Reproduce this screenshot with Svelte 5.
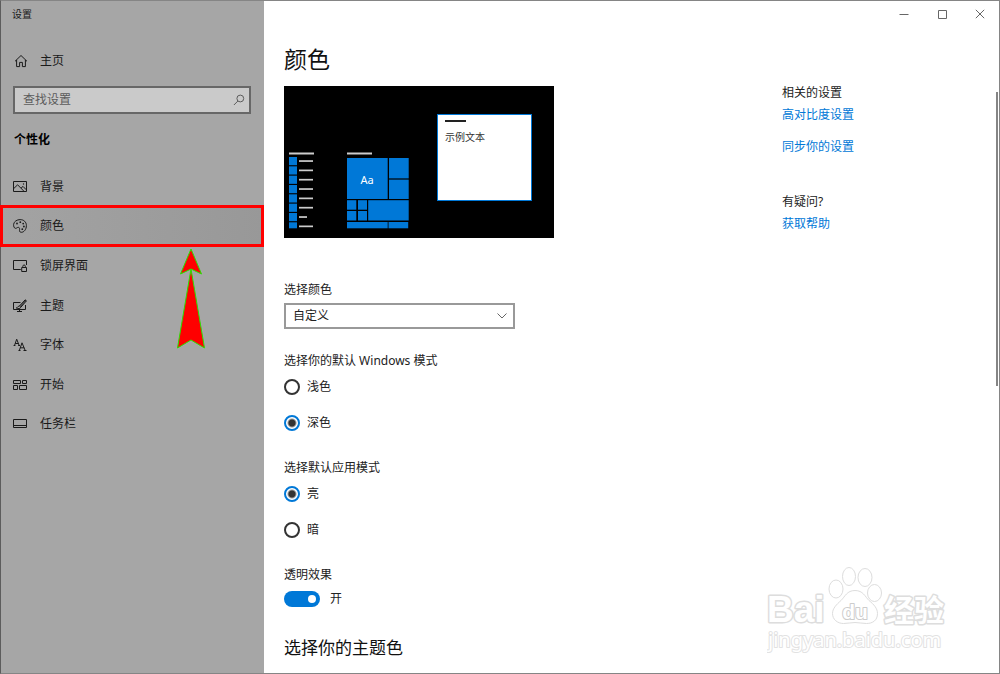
<script lang="ts">
  const navItems = [
    { id: 'background', label: '背景' },
    { id: 'colors', label: '颜色' },
    { id: 'lock', label: '锁屏界面' },
    { id: 'themes', label: '主题' },
    { id: 'fonts', label: '字体' },
    { id: 'start', label: '开始' },
    { id: 'taskbar', label: '任务栏' },
  ];

  const appRows = [0, 1, 2, 3, 4, 5, 6, 7];

  let active = $state('colors');
  let query = $state('');
  let colorMode = $state('custom');
  let windowsMode = $state('dark');
  let appMode = $state('light');
  let transparency = $state(true);
</script>

<div class="window">
  <aside class="sidebar">
    <div class="window-title">设置</div>
    <a class="home" href="#home">
      <svg class="icon" viewBox="0 0 14 14" aria-hidden="true">
        <path d="M1 7.3 7 1.5l6 5.8M2.6 6v6.6h3V8.4h2.8v4.2h3V6" />
      </svg>
      主页
    </a>

    <div class="search">
      <input type="text" aria-label="查找设置" placeholder="查找设置" bind:value={query} />
      <svg viewBox="0 0 12 12" aria-hidden="true">
        <circle cx="7.3" cy="4.5" r="3.4" />
        <path d="M4.9 7 .9 11" />
      </svg>
    </div>

    <h2 class="group">个性化</h2>

    <nav>
      {#each navItems as item}
        <a
          class="nav-item"
          class:active={active === item.id}
          href="#{item.id}"
          onclick={() => (active = item.id)}
        >
          <svg class="icon" viewBox="0 0 14 14" aria-hidden="true">
            {#if item.id === 'background'}
              <path d="M.5 1.5h13v10H.5zM.8 8.5 4.6 4.8l6.4 6.5M8 8.2l2-1.800 3.300 3.400" />
              <circle cx="10.5" cy="4" r=".3" />
            {:else if item.id === 'colors'}
              <path
                d="M.6 5.4C.9 2.400 4 .6 7.200.6c3.600 0 6.200 2.500 6.200 6 0 3.700-2.400 6.700-5 6.700-2.200 0-2-1.700-1.800-2.900.2-1.400-.6-2.300-1.800-2-1 .3-1.500 1.200-2.500.9C1.100 9 .5 7.300.6 5.400Z"
              />
              <g class="dots">
                <circle cx="4" cy="4.500" r=".9" />
                <circle cx="7.300" cy="3.200" r=".9" />
                <circle cx="10.200" cy="4.600" r=".9" />
                <circle cx="10.900" cy="7.500" r=".9" />
                <circle cx="9.300" cy="10.200" r=".9" />
              </g>
            {:else if item.id === 'lock'}
              <path d="M7.500 10.500H.5v-9h13V6M4.500 10.500h3M8.700 8.500h4.800v4H8.700zM9.800 8.500V7.300c0-1.800 2.600-1.800 2.600 0v1.200" />
            {:else if item.id === 'themes'}
              <path d="M7.500 3.500h-7v7h12V6M6.500 10.500v2M4 12.500h5" />
              <path d="M13.200 1 7.500 7.200M12.200.8l1.200 1.100-5.500 6.300-1.500-1.200zM6.200 7.200C4.400 7.100 4.800 8.800 3.300 9c1.800 1 4.200.8 4.400-.7" />
            {:else if item.id === 'fonts'}
              <path d="M1.500 7.500 3.700 1.200 6.200 7.500M2.200 5.500h3M.6 7.500h1.800M5.200 7.500H7" />
              <path d="M6.300 12.500 9 4.800l3.200 7.700M7.300 9.800h3.900M5.500 12.500h2M10.500 12.500h3" />
            {:else if item.id === 'start'}
              <path d="M.5 2.500h7v3h-7zM9.500 2.500h4v3h-4zM.5 7.500h4v4h-4zM6.500 7.500h7v4h-7z" />
            {:else}
              <path d="M.5 2.500h13v8H.5zM.5 8.500h13" />
            {/if}
          </svg>
          {item.label}
        </a>
      {/each}
      <svg class="pointer" viewBox="0 0 30 102" aria-hidden="true">
        <path d="M15 1 25.500 26 15 21 4.500 26ZM15 21 28.500 100 15 92 1.500 100Z" />
      </svg>
    </nav>
  </aside>

  <main>
    <div class="caption">
      <button aria-label="最小化">
        <svg viewBox="0 0 10 10"><path d="M.5 5.500h9" /></svg>
      </button>
      <button aria-label="最大化">
        <svg viewBox="0 0 10 10"><path d="M1.500 1.500h8v8h-8z" /></svg>
      </button>
      <button aria-label="关闭">
        <svg viewBox="0 0 10 10"><path d="M.8.8l8.400 8.400M9.200.8.8 9.200" /></svg>
      </button>
    </div>

    <div class="page">
      <div class="content">
        <h1>颜色</h1>

        <svg class="preview" viewBox="0 0 270 152" role="img" aria-label="预览">
          <rect width="270" height="152" fill="#000" />
          <g fill="#ccc">
            <rect x="5" y="66.500" width="25" height="2" />
            <rect x="63" y="66.500" width="25" height="2" />
            {#each appRows as row}
              <rect x="15" y={74.2 + row * 9.33} width={row === 6 ? 8 : 14} height="1.700" />
            {/each}
          </g>
          <g fill="#0078d7">
            {#each appRows as row}
              <rect x="5" y={71 + row * 9.33} width="8" height={row === 7 ? 6 : 8.2} />
            {/each}
            <rect x="63" y="72" width="40.700" height="41" />
            <rect x="105" y="72" width="19.700" height="20.400" />
            <rect x="105" y="93.600" width="19.700" height="19.400" />
            <rect x="63" y="114.200" width="9.300" height="9.500" />
            <rect x="74" y="114.200" width="9" height="9.500" />
            <rect x="63" y="125" width="9.300" height="9.500" />
            <rect x="74" y="125" width="9" height="9.500" />
            <rect x="84.200" y="114.200" width="40.500" height="20.300" />
            <rect x="63" y="136" width="40.700" height="6.300" />
            <rect x="104.500" y="136" width="19.700" height="6.300" />
          </g>
          <text x="83" y="98" text-anchor="middle" font-size="11" fill="#fff">Aa</text>
          <rect x="153.500" y="28.500" width="94" height="86" fill="#fff" stroke="#0078d7" />
          <rect x="161" y="34" width="21" height="2" fill="#222" />
          <text x="161" y="55" font-size="10" fill="#333">示例文本</text>
        </svg>

        <div class="field">
          <label for="color-mode">选择颜色</label>
          <div class="select">
            <select id="color-mode" bind:value={colorMode}>
              <option value="light">浅色</option>
              <option value="dark">深色</option>
              <option value="custom">自定义</option>
            </select>
            <svg viewBox="0 0 10 6" aria-hidden="true"><path d="M.5.5 5 5 9.500.5" /></svg>
          </div>
        </div>

        <fieldset>
          <legend>选择你的默认 Windows 模式</legend>
          <label><input type="radio" value="light" bind:group={windowsMode} />浅色</label>
          <label><input type="radio" value="dark" bind:group={windowsMode} />深色</label>
        </fieldset>

        <fieldset>
          <legend>选择默认应用模式</legend>
          <label><input type="radio" value="light" bind:group={appMode} />亮</label>
          <label><input type="radio" value="dark" bind:group={appMode} />暗</label>
        </fieldset>

        <fieldset>
          <legend>透明效果</legend>
          <label class="toggle">
            <input type="checkbox" role="switch" bind:checked={transparency} />
            {transparency ? '开' : '关'}
          </label>
        </fieldset>

        <h2>选择你的主题色</h2>
      </div>

      <div class="related">
        <h3>相关的设置</h3>
        <a href="#contrast">高对比度设置</a>
        <a href="#sync">同步你的设置</a>
        <h3>有疑问?</h3>
        <a href="#help">获取帮助</a>
      </div>

      <div class="scrollbar"></div>
    </div>
  </main>

  <svg class="watermark" viewBox="0 0 184 90" role="img" aria-label="Baidu 经验">
    <g class="outline">
      <ellipse cx="69" cy="22" rx="7" ry="9" />
      <ellipse cx="82" cy="9.500" rx="6.500" ry="9" />
      <ellipse cx="98" cy="10.500" rx="7" ry="9" />
      <ellipse cx="107.500" cy="26" rx="7" ry="8.500" />
      <path d="M88 23.500c8 0 10 6 14 10 5 4 8.500 8 8.500 13 0 7-5 10-11 10-4 0-8-1-11.500-1s-7.500 1-11.500 1c-6 0-11-4-11-10 0-5 4-9 8.500-13 4-4 6-10 14-10Z" />
    </g>
    <text class="brand latin" x="0" y="55" font-size="37">Bai</text>
    <text class="brand latin du" x="88" y="52" font-size="21" text-anchor="middle">du</text>
    <text class="brand" x="117" y="54" font-size="30">经验</text>
    <text class="brand site" x="1" y="80" font-size="20">jingyan.baidu.com</text>
  </svg>
</div>

<style>
  :global(body) {
    margin: 0;
    background: #fff;
  }

  .window {
    position: relative;
    display: grid;
    grid-template-columns: 263px 1fr;
    box-sizing: border-box;
    min-height: 100vh;
    border: 1px solid #858585;
    border-left-color: #5c5c5c;
    font-family: "Noto Sans", "Noto Sans CJK SC", sans-serif;
    font-size: 12px;
    line-height: 16px;
    color: #222;
  }

  a {
    text-decoration: none;
  }

  h1,
  h2,
  h3 {
    margin: 0;
    font-weight: 400;
  }

  .sidebar {
    background: #a6a6a6;
    color: #1a1a1a;
  }

  .window-title {
    padding: 5px 11px;
    font-size: 10px;
  }

  .home {
    display: flex;
    align-items: center;
    gap: 12px;
    height: 16px;
    margin-top: 26px;
    padding-left: 13px;
    color: inherit;
  }

  .icon {
    width: 14px;
    height: 14px;
    fill: none;
    stroke: #1a1a1a;
    stroke-width: 1;
  }

  .dots {
    fill: #1a1a1a;
    stroke: none;
  }

  .search {
    display: flex;
    align-items: center;
    box-sizing: border-box;
    height: 28px;
    margin: 17px 13px 0 12px;
    padding-right: 4px;
    border: 2px solid #676767;
    background: #cacaca;
  }

  .search input {
    flex: 1;
    min-width: 0;
    padding: 0 8px;
    border: 0;
    outline: 0;
    background: none;
    font: inherit;
  }

  .search input::placeholder {
    color: #5c5c5c;
  }

  .search svg {
    width: 12px;
    height: 12px;
    fill: none;
    stroke: #5c5c5c;
  }

  .group {
    margin: 18px 0 0 13px;
    font-size: 12px;
    font-weight: 700;
    color: #000;
  }

  nav {
    position: relative;
    display: flex;
    flex-direction: column;
    height: 277px;
    margin-top: 19px;
  }

  .nav-item {
    position: relative;
    display: flex;
    flex: 1;
    align-items: center;
    gap: 13px;
    padding-left: 12px;
    color: inherit;
  }

  .nav-item.active {
    background: linear-gradient(90deg, #a3a3a3, #989898);
  }

  .nav-item.active::after {
    content: "";
    position: absolute;
    inset: -2px 0 -1px -1px;
    border: 3px solid #f00;
  }

  .pointer {
    position: absolute;
    top: 81px;
    left: 175px;
    width: 30px;
    height: 102px;
    fill: #f00;
    stroke: #2be000;
    stroke-width: 1;
  }

  .caption {
    display: flex;
    justify-content: flex-end;
    height: 26px;
  }

  .caption button {
    display: grid;
    place-items: center;
    width: 38px;
    padding: 0;
    border: 0;
    background: none;
  }

  .caption svg {
    width: 10px;
    height: 10px;
    fill: none;
    stroke: #666;
  }

  .page {
    display: flex;
    padding: 16px 1px 0 20px;
  }

  .content {
    flex: 1;
    min-width: 0;
  }

  h1 {
    font-size: 23px;
    line-height: 32px;
    color: #111;
  }

  .preview {
    display: block;
    width: 270px;
    height: 152px;
    margin-top: 11px;
  }

  .field {
    display: grid;
    gap: 5px;
    margin-top: 44px;
  }

  .select {
    position: relative;
    width: 231px;
  }

  select {
    display: block;
    width: 100%;
    height: 26px;
    padding: 0 7px;
    border: 2px solid #999;
    border-radius: 0;
    appearance: none;
    background: #fff;
    color: inherit;
    font: inherit;
  }

  .select svg {
    position: absolute;
    top: 10px;
    right: 8px;
    width: 10px;
    height: 6px;
    fill: none;
    stroke: #666;
    pointer-events: none;
  }

  fieldset {
    margin: 24px 0 0;
    padding: 0;
    border: 0;
  }

  fieldset + fieldset {
    margin-top: 29px;
  }

  legend {
    padding: 0;
  }

  fieldset label {
    display: flex;
    align-items: center;
    gap: 7px;
    width: fit-content;
    height: 16px;
    margin-top: 10px;
  }

  fieldset label + label {
    margin-top: 20px;
  }

  input[type="radio"] {
    box-sizing: border-box;
    width: 16px;
    height: 16px;
    margin: 0;
    border: 2px solid #333;
    border-radius: 50%;
    appearance: none;
    background: #fff;
  }

  input[type="radio"]:checked {
    border-color: #0078d7;
    background: radial-gradient(circle, #333 3px, #fff 5px);
  }

  fieldset .toggle {
    gap: 10px;
    margin-top: 8px;
  }

  .toggle input {
    box-sizing: border-box;
    width: 36px;
    height: 16px;
    margin: 0;
    padding: 4px;
    border-radius: 8px;
    appearance: none;
    background: #777;
  }

  .toggle input::before {
    content: "";
    display: block;
    width: 8px;
    height: 8px;
    border-radius: 50%;
    background: #fff;
  }

  .toggle input:checked {
    background: #0078d7;
  }

  .toggle input:checked::before {
    margin-left: auto;
  }

  .content h2 {
    margin: 29px 0 10px;
    font-size: 17px;
    line-height: 24px;
    color: #111;
  }

  .related {
    display: flex;
    flex-direction: column;
    align-items: flex-start;
    width: 214px;
    padding-top: 42px;
  }

  .related h3 {
    font-size: 12px;
  }

  .related a {
    margin-top: 6px;
    color: #0078d7;
  }

  .related a + a {
    margin-top: 16px;
  }

  .related a + h3 {
    margin-top: 39px;
  }

  .scrollbar {
    width: 2px;
    height: 294px;
    margin-top: 49px;
    background: #858585;
  }

  .watermark {
    position: absolute;
    right: 48px;
    bottom: 16px;
    width: 184px;
    height: 90px;
  }

  .outline {
    fill: #fff;
    stroke: #ddd;
    stroke-width: 1;
  }

  .brand {
    fill: #fff;
    stroke: #ddd;
    stroke-width: 3;
    stroke-linejoin: round;
    paint-order: stroke;
    font-weight: 700;
  }

  .latin {
    font-family: "Liberation Sans", sans-serif;
  }

  .du {
    stroke: #ccc;
    stroke-width: 2;
  }

  .site {
    stroke: #e2e2e2;
    stroke-width: 2;
    font-weight: 400;
  }
</style>
